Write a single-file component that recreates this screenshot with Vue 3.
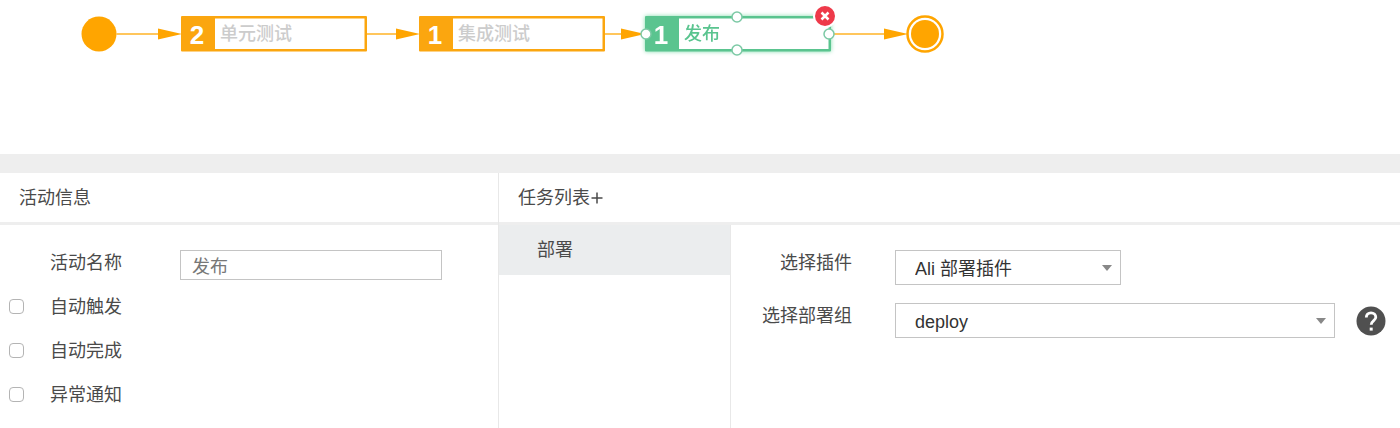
<script setup>
import { ref } from 'vue'

const nodes = [
  { x: 181, count: 2, label: '单元测试', active: false },
  { x: 419, count: 1, label: '集成测试', active: false },
  { x: 645, count: 1, label: '发布', active: true },
]
const arrows = [
  { from: 116, to: 182 },
  { from: 367, to: 420 },
  { from: 605, to: 645 },
  { from: 834, to: 908 },
]
const handles = [
  { x: 737, y: 17 },
  { x: 737, y: 50 },
  { x: 829, y: 34 },
  { x: 646, y: 34 },
]
const options = ref([
  { id: 'auto-start', label: '自动触发', checked: false },
  { id: 'auto-finish', label: '自动完成', checked: false },
  { id: 'alert', label: '异常通知', checked: false },
])
const name = ref('发布')
const plugin = ref('Ali 部署插件')
const group = ref('deploy')
</script>

<template>
  <main class="page">
    <section class="canvas">
      <svg class="flow" width="960" height="80" viewBox="0 0 960 80">
        <circle class="dot" cx="99" cy="34" r="17.5" />
        <g v-for="a in arrows" :key="a.from">
          <path class="wire" :d="`M${a.from} 34H${a.to - 20}`" />
          <path class="dot" :d="`M${a.to - 24} 28.5L${a.to} 34L${a.to - 24} 39.5Z`" />
        </g>
        <g v-for="n in nodes" :key="n.x" :class="['node', { active: n.active }]">
          <rect class="box" :x="n.x" y="16" width="186" height="35.5" rx="1" />
          <rect class="inner" :x="n.x + 34" y="18.5" width="149.5" height="30.5" />
          <text class="count" :x="n.x + 16" y="44">{{ n.count }}</text>
          <text class="label" :x="n.x + 39" y="40">{{ n.label }}</text>
        </g>
        <circle v-for="h in handles" :key="h.x + '-' + h.y" class="handle" :cx="h.x" :cy="h.y" r="5" />
        <circle class="halo" cx="825" cy="16" r="12" />
        <circle class="remove" cx="825" cy="16" r="10" />
        <path class="cross" d="M821.5 12.5l7 7M828.5 12.5l-7 7" />
        <circle class="ring" cx="925" cy="34" r="17.5" />
        <circle class="dot" cx="925" cy="34" r="14" />
      </svg>
    </section>

    <div class="panels">
      <section class="info">
        <h2 class="head">活动信息</h2>
        <div class="name-row">
          <label for="activity-name">活动名称</label>
          <input id="activity-name" v-model="name" class="field" type="text" />
        </div>
        <div v-for="o in options" :key="o.id" class="check-row">
          <input :id="o.id" v-model="o.checked" class="check" type="checkbox" />
          <label :for="o.id">{{ o.label }}</label>
        </div>
      </section>

      <section class="tasks">
        <h2 class="head">
          任务列表<button class="add" type="button" aria-label="+">
            <svg width="12" height="12" viewBox="0 0 12 12"><path d="M6 0.5V11.5M0.5 6H11.5" /></svg>
          </button>
        </h2>
        <div class="body">
          <nav class="list">
            <button class="task" type="button">部署</button>
          </nav>
          <div class="form">
            <div class="row">
              <label for="plugin">选择插件</label>
              <div class="select short">
                <select id="plugin" v-model="plugin"><option>Ali 部署插件</option></select>
              </div>
            </div>
            <div class="row">
              <label for="group">选择部署组</label>
              <div class="select">
                <select id="group" v-model="group"><option>deploy</option></select>
              </div>
              <button class="help" type="button" aria-label="?">
                <svg width="30" height="30" viewBox="0 0 30 30">
                  <circle cx="15" cy="15" r="14.5" />
                  <path d="M10.3 11.6C10.3 8.6 12.3 6.8 15 6.8S19.8 8.6 19.8 11.3C19.8 14.6 15.2 14.7 15.2 18.8" />
                  <rect x="13.7" y="21.6" width="3" height="3" />
                </svg>
              </button>
            </div>
          </div>
        </div>
      </section>
    </div>
  </main>
</template>

<style>
body {
  margin: 0;
  background: #fff;
}
</style>

<style scoped>
.page {
  display: flex;
  flex-direction: column;
  min-height: 100vh;
  font: 18px/24px "Liberation Sans", "Noto Sans CJK SC", sans-serif;
  color: #4a4a4a;
}
.page * {
  box-sizing: border-box;
}
input,
select,
button {
  margin: 0;
  padding: 0;
  font: inherit;
  color: inherit;
  background: none;
  border: 0;
  border-radius: 0;
  appearance: none;
}
label {
  line-height: 26px;
}
.canvas {
  height: 173px;
  border-bottom: 19px solid #eee;
  overflow: hidden;
}
.flow {
  display: block;
}
.dot {
  fill: #ffa500;
}
.wire {
  stroke: #ffc65c;
  stroke-width: 2;
}
.box {
  fill: #fba60f;
}
.inner {
  fill: #fff;
}
.count {
  fill: #fff;
  font-size: 26px;
  font-weight: bold;
  text-anchor: middle;
}
.label {
  fill: #ccc;
  font-weight: 500;
}
.active {
  filter: drop-shadow(0 0 2px #7fdcab);
}
.active .box {
  fill: #5ac48f;
}
.active .label {
  fill: #5ac48f;
}
.handle {
  fill: #fff;
  stroke: #7cc9a5;
  stroke-width: 1.5;
}
.halo {
  fill: #fff;
}
.remove {
  fill: #ee3a4a;
}
.cross {
  stroke: #fff;
  stroke-width: 2.5;
}
.ring {
  fill: #fff;
  stroke: #ffa500;
  stroke-width: 2.5;
}
.panels {
  display: flex;
  flex: 1;
}
.info {
  flex: 0 0 499px;
  border-right: 1px solid #e8e8e8;
}
.tasks {
  display: flex;
  flex: 1;
  flex-direction: column;
  min-width: 0;
}
.head {
  display: flex;
  align-items: center;
  height: 52px;
  margin: 0;
  padding: 0 19px;
  border-bottom: 3px solid #eee;
  font-size: 18px;
  font-weight: normal;
}
.add {
  display: flex;
  margin-left: 1px;
}
.add path {
  stroke: #4a4a4a;
  stroke-width: 1.5;
}
.name-row {
  display: flex;
  align-items: flex-start;
  gap: 58px;
  padding: 25px 0 0 50px;
}
.field {
  width: 262px;
  height: 30px;
  padding: 0 11px;
  border: 1px solid #c4c4c4;
  color: #777;
}
.check-row {
  display: flex;
  align-items: center;
  gap: 26px;
  height: 24px;
  margin-bottom: 20px;
  padding-left: 9px;
}
.check-row label {
  padding-top: 2px;
}
.name-row + .check-row {
  margin-top: 14px;
}
.check {
  width: 15px;
  height: 15px;
  border: 1px solid #b4b4b4;
  border-radius: 4px;
}
.check:checked {
  background: #5ac48f;
}
.body {
  display: flex;
  flex: 1;
}
.list {
  flex: 0 0 232px;
  border-right: 1px solid #e8e8e8;
}
.task {
  display: block;
  width: 100%;
  height: 50px;
  padding-left: 38px;
  background: #ebedee;
  text-align: left;
}
.form {
  display: flex;
  flex: 1;
  flex-direction: column;
  gap: 18px;
  padding: 25px 14px 0 0;
}
.row {
  display: flex;
  align-items: flex-start;
}
.row label {
  width: 121px;
  margin-right: 43px;
  text-align: right;
}
.select {
  position: relative;
  flex: 1;
}
.select.short {
  flex: 0 0 226px;
}
.select select {
  display: block;
  width: 100%;
  height: 35px;
  padding: 2px 30px 0 19px;
  border: 1px solid #c4c4c4;
  color: #333;
}
.select::after {
  position: absolute;
  top: 15px;
  right: 9px;
  border: solid transparent;
  border-width: 6px 5px 0;
  border-top-color: #888;
  content: "";
  pointer-events: none;
}
.help {
  display: flex;
  align-self: center;
  margin-left: 21px;
}
.help circle {
  fill: #505050;
}
.help rect {
  fill: #fff;
}
.help path {
  fill: none;
  stroke: #fff;
  stroke-width: 2.8;
}
</style>
